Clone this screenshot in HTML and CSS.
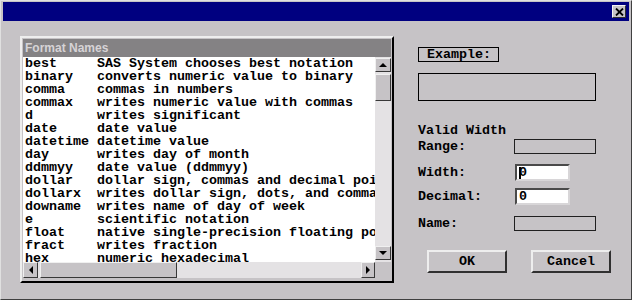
FILE: index.html
```html
<!DOCTYPE html>
<html>
  <head>
    <meta http-equiv="Content-Type" content="text/html; charset=utf-8" />
    <title>Formats</title>
    <link rel="stylesheet" href="styles.css">
  </head>
  <body>
    <div class="window">
      <div class="titlebar">
        <div class="close">
          <svg width="9" height="8" viewBox="0 0 9 8"><path d="M1 0.5 L8 7.5 M8 0.5 L1 7.5" stroke="#000" stroke-width="1.8" fill="none"/></svg>
        </div>
      </div>
      <div class="content">
        <div class="listbox">
          <div class="list-head">Format Names</div>
          <div class="list-main">
            <div class="rows">
              <div class="row"><span class="fmt">best</span><span>SAS System chooses best notation</span></div>
              <div class="row"><span class="fmt">binary</span><span>converts numeric value to binary</span></div>
              <div class="row"><span class="fmt">comma</span><span>commas in numbers</span></div>
              <div class="row"><span class="fmt">commax</span><span>writes numeric value with commas</span></div>
              <div class="row"><span class="fmt">d</span><span>writes significant</span></div>
              <div class="row"><span class="fmt">date</span><span>date value</span></div>
              <div class="row"><span class="fmt">datetime</span><span>datetime value</span></div>
              <div class="row"><span class="fmt">day</span><span>writes day of month</span></div>
              <div class="row"><span class="fmt">ddmmyy</span><span>date value (ddmmyy)</span></div>
              <div class="row"><span class="fmt">dollar</span><span>dollar sign, commas and decimal point</span></div>
              <div class="row"><span class="fmt">dollarx</span><span>writes dollar sign, dots, and commas</span></div>
              <div class="row"><span class="fmt">downame</span><span>writes name of day of week</span></div>
              <div class="row"><span class="fmt">e</span><span>scientific notation</span></div>
              <div class="row"><span class="fmt">float</span><span>native single-precision floating point</span></div>
              <div class="row"><span class="fmt">fract</span><span>writes fraction</span></div>
              <div class="row"><span class="fmt">hex</span><span>numeric hexadecimal</span></div>
            </div>
            <div class="vscroll">
              <div class="sbtn up"><span class="arr-up"></span></div>
              <div class="sbtn vthumb"></div>
              <div class="vtrack"></div>
              <div class="sbtn down"><span class="arr-down"></span></div>
            </div>
          </div>
          <div class="hscroll-row">
            <div class="hscroll">
              <div class="sbtn left"><span class="arr-left"></span></div>
              <div class="sbtn hthumb"></div>
              <div class="htrack"></div>
              <div class="sbtn right"><span class="arr-right"></span></div>
            </div>
            <div class="corner"></div>
          </div>
        </div>

        <div class="side">
          <div class="example-label">Example:</div>
          <div class="example-box"></div>
          <div class="valid">Valid Width</div>
          <div class="field range-row">
            <label>Range:</label>
            <div class="flatbox wide"></div>
          </div>
          <div class="field width-row">
            <label>Width:</label>
            <div class="input"><span class="caret"></span>0</div>
          </div>
          <div class="field decimal-row">
            <label>Decimal:</label>
            <div class="input">0</div>
          </div>
          <div class="field name-row">
            <label>Name:</label>
            <div class="flatbox wide"></div>
          </div>
          <div class="buttons">
            <div class="button">OK</div>
            <div class="button">Cancel</div>
          </div>
        </div>
      </div>
    </div>
  </body>
</html>
```

FILE: styles.css
```css
body {
  margin: 0;
  font-family: "Liberation Mono", "DejaVu Sans Mono", monospace;
  font-weight: bold;
  font-size: 13.33px;
  color: #000;
}
.window {
  width: 632px;
  height: 300px;
  box-sizing: border-box;
  border: 1px solid;
  border-color: #e0e0e0 #404040 #404040 #e0e0e0;
  padding: 1px 2px 1px 2px;
  background: #c6c3c6;
  display: flex;
  flex-direction: column;
}
.titlebar {
  height: 19px;
  flex: none;
  background: #000080;
  display: flex;
  justify-content: flex-end;
  align-items: center;
  padding-right: 3px;
}
.close {
  width: 14px;
  height: 13px;
  box-sizing: border-box;
  background: #c6c3c6;
  border: 1px solid;
  border-color: #f4f4f4 #303030 #303030 #f4f4f4;
  display: flex;
  align-items: center;
  justify-content: center;
}
.content {
  flex: 1;
  display: flex;
  padding: 15px 0 0 17px;
  gap: 24px;
}

/* list */
.listbox {
  width: 374px;
  height: 247px;
  box-sizing: border-box;
  border: 2px solid;
  border-color: #eeeeee #000 #000 #eeeeee;
  padding: 1px;
  display: flex;
  flex-direction: column;
}
.list-head {
  height: 18px;
  flex: none;
  background: #848284;
  color: #d6d3d6;
  font-family: "Liberation Sans", Arial, sans-serif;
  font-size: 12px;
  line-height: 18px;
  padding-left: 2px;
}
.list-main {
  height: 205px;
  flex: none;
  display: flex;
}
.rows {
  flex: 1;
  background: #fff;
  overflow: hidden;
  padding-left: 2px;
}
.row {
  display: flex;
  height: 13px;
  line-height: 13px;
  white-space: pre;
}
.fmt {
  width: 72px;
  flex: none;
}
.vscroll {
  width: 16px;
  flex: none;
  background: #e4e2e4;
  display: flex;
  flex-direction: column;
}
.sbtn {
  box-sizing: border-box;
  background: #c6c3c6;
  border: 1px solid;
  border-color: #f0f0f0 #383838 #383838 #f0f0f0;
  display: flex;
  align-items: center;
  justify-content: center;
  flex: none;
}
.up {
  margin-top: 1px;
  height: 14px;
}
.vthumb {
  margin-top: 2px;
  height: 27px;
}
.vtrack,
.htrack {
  flex: 1;
}
.down {
  height: 14px;
  margin-bottom: 2px;
}
.arr-up {
  border: 4px solid transparent;
  border-bottom: 4px solid #000;
  border-top: 0;
}
.arr-down {
  border: 4px solid transparent;
  border-top: 4px solid #000;
  border-bottom: 0;
}
.arr-left {
  border: 4px solid transparent;
  border-right: 4px solid #000;
  border-left: 0;
}
.arr-right {
  border: 4px solid transparent;
  border-left: 4px solid #000;
  border-right: 0;
}
.hscroll-row {
  height: 16px;
  flex: none;
  display: flex;
}
.hscroll {
  flex: 1;
  display: flex;
  background: #e4e2e4;
}
.left {
  width: 15px;
}
.hthumb {
  margin-left: 2px;
  width: 137px;
}
.right {
  width: 14px;
}
.corner {
  width: 16px;
}

/* side panel */
.side {
  width: 193px;
  display: flex;
  flex-direction: column;
  line-height: 13px;
}
.example-label {
  margin-top: 11px;
  width: 81px;
  height: 15px;
  box-sizing: border-box;
  border: 1px solid #000;
  padding-left: 8px;
}
.example-box {
  margin-top: 11px;
  width: 178px;
  height: 28px;
  box-sizing: border-box;
  border: 1px solid #000;
}
.valid {
  margin-top: 23px;
  line-height: 14px;
}
.field {
  display: flex;
  align-items: center;
}
.field label {
  width: 96px;
}
.range-row {
  height: 17px;
}
.flatbox {
  height: 15px;
  box-sizing: border-box;
  border: 1px solid #202020;
}
.wide {
  width: 82px;
}
.input {
  margin-left: 1px;
  width: 55px;
  height: 17px;
  box-sizing: border-box;
  border: 2px solid;
  border-color: #4a4a4a #d8d6d8 #d8d6d8 #4a4a4a;
  background: #fff;
  padding-left: 2px;
  line-height: 13px;
  display: flex;
  align-items: center;
}
.caret {
  display: inline-block;
  width: 2px;
  height: 12px;
  background: #000;
  margin-right: -2px;
}
.width-row {
  margin-top: 9px;
}
.decimal-row {
  margin-top: 7px;
}
.name-row {
  margin-top: 11px;
}
.buttons {
  margin-top: 19px;
  padding-left: 9px;
  display: flex;
  gap: 24px;
}
.button {
  width: 80px;
  height: 23px;
  box-sizing: border-box;
  border: 2px solid;
  border-color: #eeeeee #303030 #303030 #eeeeee;
  display: flex;
  align-items: center;
  justify-content: center;
}
```
